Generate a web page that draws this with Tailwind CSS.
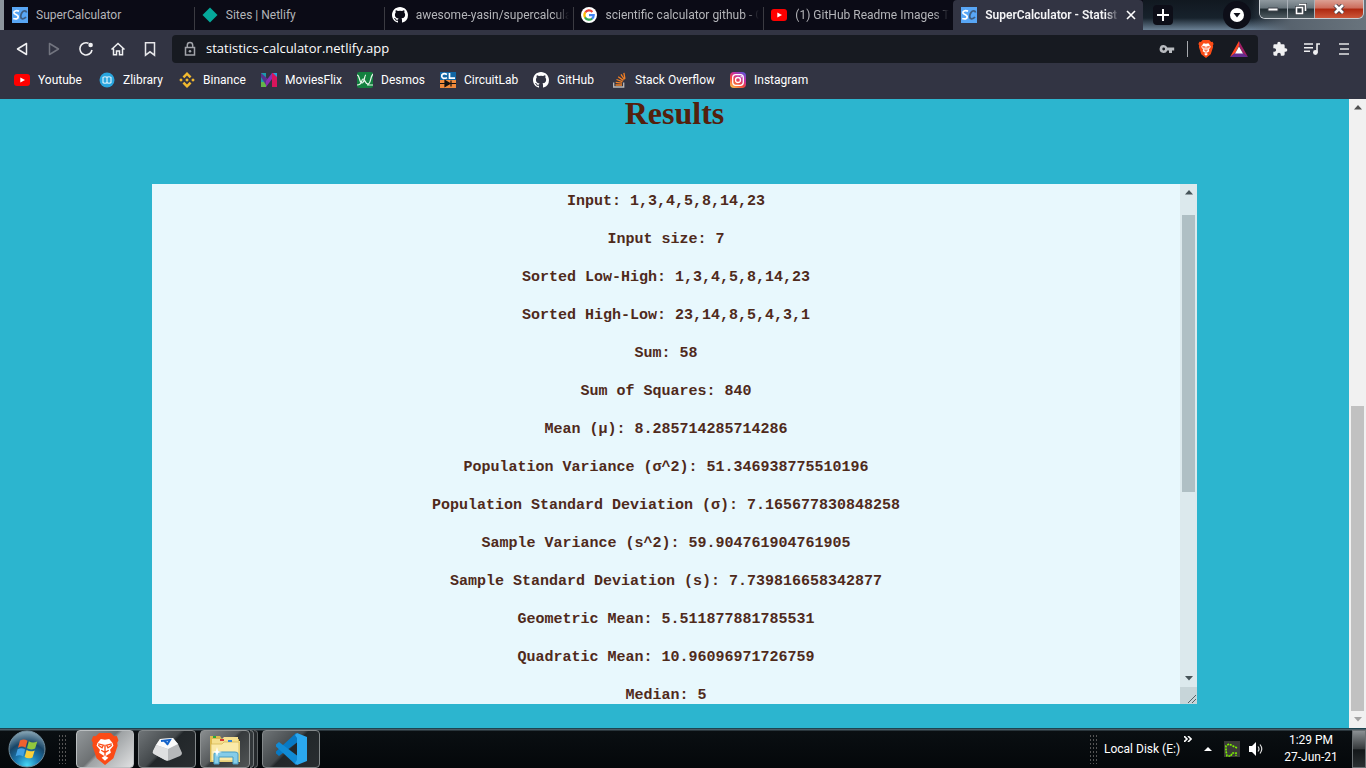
<!DOCTYPE html>
<html lang="en">
<head>
<meta charset="utf-8">
<title>SuperCalculator - Statistics</title>
<script src="https://cdn.jsdelivr.net/npm/@tailwindcss/browser@4"></script>
</head>
<body class="flex h-screen flex-col overflow-hidden bg-[#2cb5cf] font-['Roboto',sans-serif] text-xs text-white">

<svg class="hidden" aria-hidden="true">
  <symbol id="github" viewBox="0 0 16 16"><path fill="#fff" d="M8 0C3.58 0 0 3.58 0 8c0 3.54 2.29 6.53 5.47 7.59.4.07.55-.17.55-.38v-1.49C4 14.16 3.48 13.2 3.32 12.76c-.09-.23-.48-.94-.82-1.13-.28-.15-.68-.52-.01-.53.63-.01 1.08.58 1.23.82.72 1.21 1.87.87 2.33.66.07-.52.28-.87.51-1.07-1.78-.2-3.64-.89-3.64-3.95 0-.87.31-1.59.82-2.15-.08-.2-.36-1.02.08-2.12 0 0 .67-.21 2.2.82a7.6 7.6 0 0 1 4 0c1.53-1.04 2.2-.82 2.2-.82.44 1.1.16 1.92.08 2.12.51.56.82 1.27.82 2.15 0 3.07-1.87 3.75-3.65 3.95.29.25.54.73.54 1.48v2.2c0 .21.15.46.55.38A8.01 8.01 0 0 0 16 8c0-4.42-3.58-8-8-8z"/></symbol>
  <symbol id="youtube" viewBox="0 0 16 16"><rect y="2" width="16" height="12" rx="3" fill="#f00"/><path d="M6.3 5.4 11 8l-4.7 2.600z" fill="#fff"/></symbol>
  <symbol id="sc" viewBox="0 0 16 16"><path fill="#58a6f5" d="M0 0h16v16H0z"/><path d="M7 4.200C4 3 1.500 4.200 2 6c.5 1.600 4 1.500 4.200 3.700.2 2.300-2.700 2.600-5 1.800" fill="none" stroke="#fff" stroke-width="1.800"/><path d="M14.600 5.500C14 3.500 11.600 3.300 10 5.600c-1.800 2.700-1.800 6 .5 6.200 1.300.1 2.600-.7 3.500-1.800" fill="none" stroke="#3f5d80" stroke-width="1.800"/></symbol>
  <symbol id="brave" viewBox="0 0 32 38"><path d="M9 0h14l4 4 3-.5 2 5-1.500 3L31 15l-5 15-10 8L6 30 1 15l.5-3.500L0 8.500l2-5L5 4z" fill="#fb4b16"/><path d="m16 8 5-1 4 5 1 3-4 5 1 3.500-7 4.500-7-4.500L10 20l-4-5 1-3 4-5zM16 27l4 2.500-4 3.500-4-3.500z" fill="#fff"/><path d="m8 13 6 1.500-1.500 3L8 14.500M24 13l-6 1.500 1.500 3 4.500-3M16 14v8m-4.500-1.500L16 23l4.500-2.500M16 23v4" stroke="#fb4b16" stroke-width="1.600" fill="none"/></symbol>
</svg>

<!-- Tab strip -->
<header class="flex h-[30px] shrink-0 bg-[linear-gradient(180deg,#111820_0%,#17222c_60%,#6b8195_100%)]">
  <div class="w-1 shrink-0 bg-[#8b949c]"></div>
  <nav class="grid min-w-0 flex-[0_1_1139px] grid-cols-6 bg-[#0b0b16] text-[#b4b5b9]" aria-label="Tabs">
    <a href="#" class="flex min-w-0 items-center gap-2 pl-2"><svg class="size-4 shrink-0"><use href="#sc"/></svg><span>SuperCalculator</span></a>
    <a href="#" class="flex min-w-0 items-center gap-2 bg-[linear-gradient(#3b3b42,#3b3b42)] bg-[length:1px_23px] bg-left-bottom bg-no-repeat pl-2"><svg class="size-4 shrink-0" viewBox="0 0 16 16"><path d="M8 .5 15.500 8 8 15.500.5 8z" fill="#05a99b"/></svg><span>Sites | Netlify</span></a>
    <a href="#" class="flex min-w-0 items-center gap-2 bg-[linear-gradient(#3b3b42,#3b3b42)] bg-[length:1px_23px] bg-left-bottom bg-no-repeat pr-1 pl-2"><svg class="size-4 shrink-0"><use href="#github"/></svg><span class="overflow-hidden mask-r-from-90% whitespace-nowrap">awesome-yasin/supercalculat</span></a>
    <a href="#" class="flex min-w-0 items-center gap-2 bg-[linear-gradient(#3b3b42,#3b3b42)] bg-[length:1px_23px] bg-left-bottom bg-no-repeat pr-1 pl-2"><svg class="size-4 shrink-0" viewBox="0 0 16 16"><circle cx="8" cy="8" r="8" fill="#fff"/><g fill="none" stroke-width="2.200"><path d="M4.200 5.500A4.600 4.600 0 0 1 11.400 4.900" stroke="#ea4335"/><path d="M4.200 5.300a5 5 0 0 0 0 5.400" stroke="#fbbc05"/><path d="M4 10.400a4.700 4.700 0 0 0 7.200 1.100" stroke="#34a853"/><path d="M8 8.200h4.700a4.500 4.500 0 0 1-1.700 3.500" stroke="#4285f4"/></g></svg><span class="overflow-hidden mask-r-from-90% whitespace-nowrap">scientific calculator github - G</span></a>
    <a href="#" class="flex min-w-0 items-center gap-2 bg-[linear-gradient(#3b3b42,#3b3b42)] bg-[length:1px_23px] bg-left-bottom bg-no-repeat pr-1 pl-2"><svg class="size-4 shrink-0"><use href="#youtube"/></svg><span class="overflow-hidden mask-r-from-90% whitespace-nowrap">(1) GitHub Readme Images T</span></a>
    <div class="flex min-w-0 items-center gap-2 rounded-t bg-[#323443] pr-1 pl-2 font-semibold text-[#f4f4f6]"><svg class="size-4 shrink-0"><use href="#sc"/></svg><a href="#" class="min-w-0 flex-1 overflow-hidden mask-r-from-90% whitespace-nowrap">SuperCalculator - Statist</a><button aria-label="Close tab" class="-ml-1 flex size-4 shrink-0 items-center justify-center"><svg class="size-2.5" viewBox="0 0 10 10"><path d="m1 1 8 8m0-8-8 8" stroke="#fff" stroke-width="1.600"/></svg></button></div>
  </nav>
  <div class="flex flex-1 items-center pl-2.5">
    <button aria-label="New tab" class="flex size-5 items-center justify-center rounded bg-[#0d0e18]"><svg class="size-3" viewBox="0 0 12 12"><path d="M6 0v12M0 6h12" stroke="#fff" stroke-width="2"/></svg></button>
    <button aria-label="Search tabs" class="ml-auto flex size-7 items-center justify-center rounded-full bg-[#0d0e18]"><svg class="size-3.5" viewBox="0 0 14 14"><circle cx="7" cy="7" r="7" fill="#fff"/><path d="M3.500 5h7L7 9.500z" fill="#0d0e18"/></svg></button>
  </div>
  <div class="flex w-[115px] shrink-0 items-start bg-[linear-gradient(90deg,transparent,#58636e_35%,#69747d)] pr-0.5 pl-2">
    <div class="flex h-[19px] flex-1 overflow-hidden rounded-b-md border border-t-0 border-[#c9ced3]">
      <button aria-label="Minimize" class="flex flex-1 items-center justify-center border-r border-[#aab1b8] bg-[linear-gradient(#8f999f,#68747b_45%,#202b31_50%,#4f5b61)]"><svg class="h-1.5 w-3" viewBox="0 0 12 6"><path d="M1 2h10v3H1z" fill="#fff" stroke="#40454c"/></svg></button>
      <button aria-label="Restore" class="flex flex-1 items-center justify-center border-r border-[#aab1b8] bg-[linear-gradient(#8f999f,#68747b_45%,#263238_50%,#4f5b61)]"><svg class="size-3" viewBox="0 0 12 12"><path d="M4.500 1.500h6v6M1.500 4.500h6v6h-6z" fill="none" stroke="#41464d" stroke-width="3"/><path d="M4 1.500h6.500V8M1.500 4.500h6v6h-6z" fill="none" stroke="#fff" stroke-width="1.500"/></svg></button>
      <button aria-label="Close window" class="flex w-12 items-center justify-center bg-[linear-gradient(#dca093,#cc6c5b_45%,#ae2810_50%,#cc5638)]"><svg class="h-2.5 w-3" viewBox="0 0 12 10"><path d="m2 1 8 8m0-8L2 9" stroke="#4a3f48" stroke-width="4.500"/><path d="m2 1 8 8m0-8L2 9" stroke="#fff" stroke-width="2.600"/></svg></button>
    </div>
  </div>
</header>

<!-- Toolbar -->
<div class="flex h-9 shrink-0 items-center bg-[#323443] pl-3.5 pt-0.5">
  <div class="flex w-[158px] shrink-0 items-center gap-4 text-white">
    <button aria-label="Back"><svg class="size-4" viewBox="0 0 16 16"><path d="M12.500 2.500v11L3.500 8z" fill="none" stroke="#f0f0f2" stroke-width="1.500" stroke-linejoin="round"/></svg></button>
    <button aria-label="Forward"><svg class="size-4" viewBox="0 0 16 16"><path d="M3.500 2.500v11l9-5.500z" fill="none" stroke="#72747f" stroke-width="1.500" stroke-linejoin="round"/></svg></button>
    <button aria-label="Reload"><svg class="size-4" viewBox="0 0 16 16"><path d="M10.500 2.300A6.100 6.100 0 1 0 14 9" fill="none" stroke="#f0f0f2" stroke-width="1.600"/><circle cx="12.600" cy="4" r="2.300" fill="#f0f0f2"/></svg></button>
    <button aria-label="Home"><svg class="size-4" viewBox="0 0 16 16"><path d="m1.500 8.500 6.500-6 6.500 6M3.500 7.500v6.300h3V10h3v3.800h3V7.500" fill="none" stroke="#f0f0f2" stroke-width="1.500"/></svg></button>
    <button aria-label="Bookmark this page"><svg class="size-4" viewBox="0 0 16 16"><path d="M3.500 1.700h9v12.500L8 10.800l-4.500 3.400z" fill="none" stroke="#e6e6e9" stroke-width="1.500"/></svg></button>
  </div>
  <div class="flex h-7 min-w-0 flex-1 items-center rounded bg-[#171a21] pl-2.5 pr-2.5">
    <svg class="size-4 shrink-0" viewBox="0 0 16 16"><path d="M3.500 6.500h9v7.500h-9zM5.300 6.500V4.300a2.700 2.700 0 0 1 5.400 0v2.200" fill="none" stroke="#a2a4aa" stroke-width="1.500"/><circle cx="8" cy="10.200" r="1.300" fill="#a2a4aa"/></svg>
    <input aria-label="Address" class="ml-2 min-w-0 flex-1 bg-transparent font-['Open_Sans',sans-serif] text-[13px] outline-none" value="statistics-calculator.netlify.app">
    <button aria-label="Saved passwords"><svg class="size-4" viewBox="0 0 16 16"><path d="M4.700 4a4 4 0 1 0 3.600 5.500H10V12h3V9.500h2.200v-3H8.300A4 4 0 0 0 4.700 4zm0 2.600a1.400 1.400 0 1 1 0 2.800 1.400 1.400 0 0 1 0-2.800z" fill="#b9bbc0"/></svg></button>
    <span class="ml-3 h-4 w-px bg-[#a7a9ae]"></span>
    <button aria-label="Brave Shields" class="ml-2.5"><svg class="h-[18px] w-4"><use href="#brave"/></svg></button>
    <button aria-label="Brave Rewards" class="ml-4"><svg class="h-4 w-[18px]" viewBox="0 0 18 16"><path d="M9 0 0 16l5-3.500L9 5z" fill="#ff4724"/><path d="m9 0 9 16-5-3.500L9 5z" fill="#9e1f63"/><path d="M0 16h18l-5-4H5z" fill="#662d91"/><path d="m9 5.500 4 7H5z" fill="#fff"/></svg></button>
  </div>
  <div class="flex w-[108px] shrink-0 items-center gap-4 pl-3.5">
    <button aria-label="Extensions"><svg class="size-4" viewBox="0 0 24 24"><path fill="#f0f0f2" d="M20.500 11H19V7a2 2 0 0 0-2-2h-4V3.500a2.500 2.500 0 0 0-5 0V5H4a2 2 0 0 0-2 2v3.800h1.500a2.700 2.700 0 0 1 0 5.400H2V20a2 2 0 0 0 2 2h3.800v-1.500a2.700 2.700 0 0 1 5.400 0V22H17a2 2 0 0 0 2-2v-4h1.500a2.500 2.500 0 0 0 0-5z"/></svg></button>
    <button aria-label="Media controls"><svg class="size-4" viewBox="0 0 16 16"><path d="M0 3h9M0 6.700h9M0 10.300h6M16 3h-3v8.500" fill="none" stroke="#f0f0f2" stroke-width="1.600"/><circle cx="11.400" cy="11.500" r="2.400" fill="#f0f0f2"/></svg></button>
    <button aria-label="Menu"><svg class="size-4" viewBox="0 0 16 16"><path d="M3 3h10M4 8h9M3 13h10" stroke="#e3e3e6" stroke-width="1.600"/></svg></button>
  </div>
</div>

<!-- Bookmarks -->
<nav class="flex h-[33px] shrink-0 items-center overflow-hidden bg-[#323443] pb-1.5 pl-3.5 whitespace-nowrap" aria-label="Bookmarks">
  <a href="#" class="flex w-[85px] items-center gap-2"><svg class="size-4 shrink-0"><use href="#youtube"/></svg>Youtube</a>
  <a href="#" class="flex w-20 items-center gap-2"><svg class="size-4 shrink-0" viewBox="0 0 16 16"><circle cx="8" cy="8" r="7.500" fill="#29a5de"/><path d="M8 4.500v7M4 5.500q2-1.500 4 0 2-1.500 4 0v5q-2 1.500-4 0-2 1.500-4 0z" fill="none" stroke="#d5f0fc" stroke-width="1.200"/></svg>Zlibrary</a>
  <a href="#" class="flex w-[82px] items-center gap-2"><svg class="size-4 shrink-0" viewBox="0 0 16 16"><path d="m8 0 4.500 4.500-1.800 1.800L8 3.600 5.300 6.300 3.500 4.500zM2 6.200 3.800 8 2 9.800.2 8zM8 6.200 9.800 8 8 9.800 6.200 8zM14 6.200 15.800 8 14 9.800 12.200 8zM8 16l4.500-4.500-1.800-1.800L8 12.400 5.300 9.700l-1.800 1.800z" fill="#f3ba2f"/></svg>Binance</a>
  <a href="#" class="flex w-24 items-center gap-2"><svg class="size-4 shrink-0" viewBox="0 0 16 16"><path d="M0 1h5v14H0z" fill="#1c9bab"/><path d="M0 10h5v5H0z" fill="#63b54a"/><path d="m0 1 8 7-3 5-5-8z" fill="#58318f"/><path d="M11 1h5v14h-5z" fill="#d8155c"/><path d="m11 1-6 8v6l6-8z" fill="#8c2db4"/><path d="M12 1h4v4z" fill="#24a2db"/></svg>MoviesFlix</a>
  <a href="#" class="flex w-[83px] items-center gap-2"><svg class="size-4 shrink-0" viewBox="0 0 16 16"><rect width="16" height="16" rx="2" fill="#13803f"/><path d="M0 3c3 0 2 8 5 8s2-8 4-8M0 13c6 0 4-6 6-6s2 5 5 5 2-7 5-10M10 13h6" fill="none" stroke="#e8f7eb" stroke-width="1.200"/></svg>Desmos</a>
  <a href="#" class="flex w-[93px] items-center gap-2"><svg class="size-4 shrink-0" viewBox="0 0 16 16"><path fill="#1267a5" d="M0 0h16v8H0z"/><path fill="#f08a3c" d="M0 8h16v8H0z"/><path d="M7 2.500C4 .8 1.500 2 1.700 4.300 1.900 6.500 4.500 7 7 5.700M9.500 1v5.200H15" fill="none" stroke="#fff" stroke-width="1.700"/><path d="M0 11.500h16M5 8.500v6l5-3zM11 8.500v6" fill="#111" stroke="#111" stroke-width="1.200"/></svg>CircuitLab</a>
  <a href="#" class="flex w-20 items-center gap-2"><svg class="size-4 shrink-0"><use href="#github"/></svg>GitHub</a>
  <a href="#" class="flex w-[117px] items-center gap-[6px]"><svg class="size-4 shrink-0" viewBox="0 0 16 16"><path d="M.7 10.500V15h10v-4.500" fill="none" stroke="#bcbbbb" stroke-width="1.300"/><path d="M2.500 13h6.500M2.700 10.300l6.400.9M3.500 7.500l6 2.200M5.200 4.700l5.200 3.700M8 2.300l3.400 5.200M10.900.8l1 6" stroke="#f48024" stroke-width="1.300"/></svg>Stack Overflow</a>
  <a href="#" class="flex items-center gap-2"><svg class="size-4 shrink-0" viewBox="0 0 16 16"><defs><linearGradient id="ig" x1=".1" y1="1" x2=".8" y2="0"><stop stop-color="#fdc54b"/><stop offset=".4" stop-color="#f2463c"/><stop offset=".7" stop-color="#c830a0"/><stop offset="1" stop-color="#6453d6"/></linearGradient></defs><rect width="16" height="16" rx="4" fill="url(#ig)"/><g fill="none" stroke="#fff" stroke-width="1.300"><rect x="2.700" y="2.700" width="10.600" height="10.600" rx="3"/><circle cx="8" cy="8" r="2.500"/></g><circle cx="11.200" cy="4.800" r=".7" fill="#fff"/></svg>Instagram</a>
</nav>

<!-- Page -->
<div class="flex min-h-0 flex-1">
  <main class="flex min-w-0 flex-1 flex-col items-center pb-6 text-[#54200d]">
    <h1 class="h-[85px] shrink-0 font-['Liberation_Serif',serif] text-[32px] leading-7 font-bold">Results</h1>
    <div class="flex min-h-0 w-[77.5%] flex-1 bg-[#e8f8fd]">
      <textarea aria-label="Results" readonly class="min-w-0 flex-1 resize-none overflow-hidden pt-2 text-center font-['Liberation_Mono',monospace] text-[15px] leading-[19px] font-bold text-[#4f2a1b] outline-none">Input: 1,3,4,5,8,14,23

Input size: 7

Sorted Low-High: 1,3,4,5,8,14,23

Sorted High-Low: 23,14,8,5,4,3,1

Sum: 58

Sum of Squares: 840

Mean (μ): 8.285714285714286

Population Variance (σ^2): 51.346938775510196

Population Standard Deviation (σ): 7.165677830848258

Sample Variance (s^2): 59.904761904761905

Sample Standard Deviation (s): 7.739816658342877

Geometric Mean: 5.511877881785531

Quadratic Mean: 10.96096971726759

Median: 5</textarea>
      <div class="flex w-[17px] shrink-0 flex-col items-center bg-[#dce9ed]">
        <svg class="mb-3.5 h-[17px] w-2" viewBox="0 0 8 5"><path d="M4 0 8 4.500H0z" fill="#465358"/></svg>
        <div class="h-[277px] w-[13px] bg-[#afbfc4]"></div>
        <svg class="mt-auto h-[17px] w-2" viewBox="0 0 8 5"><path d="M0 0h8L4 4.500z" fill="#465358"/></svg>
        <svg class="h-[17px] w-[17px] bg-[#c7d5d9]" viewBox="0 0 17 17"><path d="m8 16 8-8M12 16l4-4" stroke="#566166"/></svg>
      </div>
    </div>
  </main>
  <div class="flex w-[17px] shrink-0 flex-col items-center bg-[#f1f1f1]">
    <svg class="h-[17px] w-2" viewBox="0 0 8 5"><path d="M4 0 8 4.500H0z" fill="#505050"/></svg>
    <div class="mt-auto h-[305px] w-[13px] bg-[#c1c1c1]"></div>
    <svg class="h-[17px] w-2" viewBox="0 0 8 5"><path d="M0 0h8L4 4.500z" fill="#a3a3a3"/></svg>
  </div>
</div>

<!-- Taskbar -->
<footer class="flex h-10 shrink-0 items-center border-t border-[#1d4450] bg-[linear-gradient(#4a5d66_0,#4a5d66_1px,#0a0f12_2px,#04070a)] pl-2">
  <button aria-label="Start" class="mr-3"><svg class="size-[38px]" viewBox="0 0 38 38"><defs><radialGradient id="orb" cx=".5" cy=".95" r=".95"><stop stop-color="#48d8f5"/><stop offset=".35" stop-color="#1b78b0"/><stop offset=".65" stop-color="#184567"/><stop offset="1" stop-color="#8ba9b8"/></radialGradient></defs><circle cx="19" cy="19" r="18" fill="url(#orb)" stroke="#718e9e"/><path d="M12 10.500c3-1.500 5-1.300 7.500.2l-2 7c-2.500-1.400-4.500-1.500-7.500 0z" fill="#ef6130"/><path d="M20.800 11.300c3 1.600 5.500 1.500 8.500.2l-2.200 7c-3 1.200-5.300 1.200-8.100-.2z" fill="#91c83e"/><path d="M9.600 19.300c3-1.500 5-1.300 7.500.2l-2 7c-2.500-1.500-4.500-1.600-7.500-.2z" fill="#42a1e4"/><path d="M18.600 20.100c3 1.500 5.200 1.500 8.100.3l-2.200 7c-3 1.200-5 1.200-7.900-.3z" fill="#fbcf3a"/></svg></button>
  <div class="mr-2.5 h-[30px] w-2 bg-[radial-gradient(#555_1px,transparent_1px)] bg-[length:3px_4px]"></div>
  <div class="flex h-full items-end gap-1">
    <button aria-label="Brave" class="flex h-[38px] w-[58px] items-center justify-center rounded-sm border border-[#bbbfc1] bg-[linear-gradient(135deg,#92979a,#6d7173_45%,#9fa3a5_50%,#e0e1e2)]"><svg class="h-8 w-7"><use href="#brave"/></svg></button>
    <button aria-label="Key mapper" class="flex h-[38px] w-[58px] items-center justify-center rounded-sm border border-[#83888a] bg-[linear-gradient(135deg,#6f7477,#43484b_45%,#22272a_50%,#292d30)]"><svg class="h-6 w-[30px]" viewBox="0 0 30 24"><path d="m8 2 13-1 5 6 4 9q0 2-2 3l-11 4.500q-2 .5-4-.5L2 17q-2-1-1-3l3-6z" fill="#b6b8ba"/><path d="m8 2 13-1 5 6-10 5L4 8z" fill="#fafafa"/><path d="m4 8 12 4v11.500q-2 0-3-.5L2 17q-2-1-1-3z" fill="#dfe0e1"/><path d="m9 4 9-1-3 5M12 3.500l3 3" fill="none" stroke="#1563ca" stroke-width="2"/></svg></button>
    <div class="flex items-end">
      <button aria-label="Explorer" class="flex h-[38px] w-[50px] items-center justify-center rounded-sm border border-[#8e9293] bg-[linear-gradient(135deg,#8a8e90,#575b5d_45%,#363a3c_50%,#505455)]"><svg class="size-8" viewBox="0 0 32 32"><path d="M1 3h10l2 3h17v23H1z" fill="#dcb950"/><path d="M3 6h10l2-2h14v4h2v21H3z" fill="#f5df8e"/><path d="M2 11h11l2-2h15v19H2z" fill="#fbeaa9" stroke="#d7b955" stroke-width=".8"/><path d="M4 3h3v2H4z" fill="#2aa83b"/><path d="M11 6h4v2h-4z" fill="#d53b35"/><path d="M19 7h4v2h-4z" fill="#3583d3"/><path d="M5 31V21q0-2 3-2h18q3 0 3 2v10h-5v-7H10v7z" fill="#85cce8" stroke="#479dc4"/><path d="m8 14 1 4 4 1-4 1-1 4-1-4-4-1 4-1z" fill="#fff"/></svg></button>
      <span class="h-[38px] w-1 rounded-r-sm border border-l-0 border-[#74797b] bg-[#32373a]"></span><span class="h-[38px] w-1 rounded-r-sm border border-l-0 border-[#5d6264] bg-[#25292c]"></span>
    </div>
    <button aria-label="Visual Studio Code" class="flex h-[38px] w-[58px] items-center justify-center rounded-sm border border-[#83888a] bg-[linear-gradient(135deg,#6f7477,#43484b_45%,#22272a_50%,#292d30)]"><svg class="size-8" viewBox="0 0 32 32"><path d="M24 8 4 23l-3-2.500v-2L21 0z" fill="#0879c4"/><path d="M24 24 4 9l-3 2.500v2L21 32z" fill="#118bd5"/><path d="m22 0 10 4v24l-10 4-2-2 2-3V5l-2-3z" fill="#2ba8ef"/></svg></button>
  </div>
  <div class="ml-auto h-[30px] w-2 bg-[radial-gradient(#555_1px,transparent_1px)] bg-[length:3px_4px]"></div>
  <a href="#" class="ml-[7px] w-20 whitespace-nowrap">Local Disk (E:)</a>
  <button aria-label="More toolbars" class="mb-5"><svg class="block h-1.5 w-2" viewBox="0 0 8 6"><path d="m0 0 3 3-3 3M4 0l3 3-3 3" fill="none" stroke="#fff" stroke-width="1.600"/></svg></button>
  <button aria-label="Show hidden icons" class="ml-3"><svg class="h-1 w-2" viewBox="0 0 8 4"><path d="m4 0 4 4H0z" fill="#fff"/></svg></button>
  <button aria-label="Network meter" class="ml-3"><svg class="size-4 bg-[#3a3a37]" viewBox="0 0 16 16"><path d="M13 7 9 5 5 3 2 5v5l1 5h4l1-3h4v3" fill="none" stroke="#7cf000" stroke-width="1.700" stroke-dasharray="2 1"/></svg></button>
  <button aria-label="Volume" class="ml-2"><svg class="size-4" viewBox="0 0 16 16"><path d="M1 5h3l4-4v14l-4-4H1z" fill="#fff"/><path d="M10 5.500q2 2.500 0 5M12 3.500q3.500 4.500 0 9" fill="none" stroke="#ddd" stroke-width="1.200"/></svg></button>
  <div class="ml-4 w-[62px] text-center leading-[17px] whitespace-nowrap"><div>1:29 PM</div><div>27-Jun-21</div></div>
  <button aria-label="Show desktop" class="ml-2.5 h-[38px] w-3.5 border border-[#6a7073] bg-[linear-gradient(#8b9093,#35393b_50%,#131719_52%,#2b3032)]"></button>
</footer>
</body>
</html>
